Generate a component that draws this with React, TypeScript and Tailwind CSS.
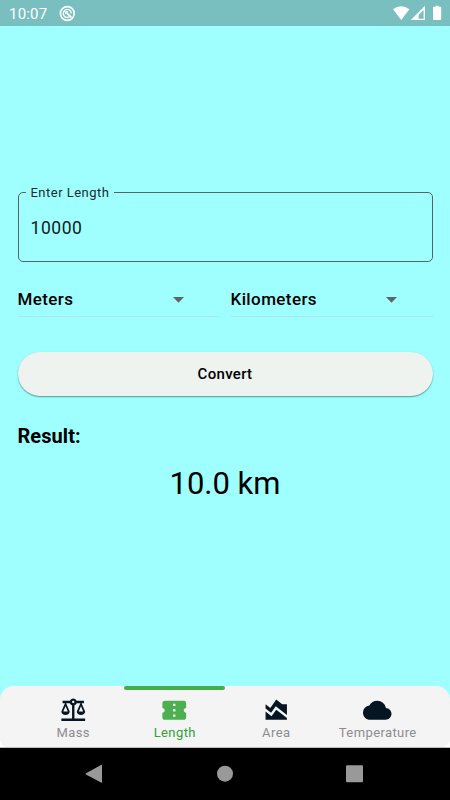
import React from "react";
import { MdAreaChart, MdBalance, MdCloud, MdConfirmationNumber } from "react-icons/md";

const tabs = [
  { label: "Mass", Icon: MdBalance },
  { label: "Length", Icon: MdConfirmationNumber, active: true },
  { label: "Area", Icon: MdAreaChart },
  { label: "Temperature", Icon: MdCloud },
];

function StatusBar() {
  return (
    <header className="flex h-[26px] shrink-0 items-center bg-[#79bfbf] pr-2 pl-[9px] text-white">
      <span className="w-[39px] pt-px text-[15px] leading-[26px] tracking-[0.2px] whitespace-nowrap">10:07</span>
      <svg className="ml-[11px]" width="17" height="17" viewBox="0 0 17 17" fill="none" stroke="currentColor">
        <circle cx="8.3" cy="8.5" r="6.9" strokeWidth="1.7" />
        <path d="M10.8 11.6A4 4 0 1 1 12.3 8.6" strokeWidth="1.3" />
        <path d="M7.2 7.4L12.4 12.4" strokeWidth="1.9" />
        <path d="M5.9 9.8V6.3h3.4z" fill="currentColor" stroke="none" />
      </svg>
      <svg className="ml-auto" width="50" height="16" viewBox="0 0 50 16" fill="currentColor">
        <path d="M1 4.3Q9 -1.6 17.4 4.3L9.2 15z" />
        <path fillRule="evenodd" d="M18.8 15L33 .8V15zM26.6 13.7h4.9V5l-4.9 4.9z" />
        <path d="M27 13.3h4.2V6L27 10.3z" fill="#79bfbf" />
        <path d="M41.8 1.8h1.7V.7h3.2v1.1h1.7q.8 0 .8.8v11.6q0 .8-.8.8h-6.6q-.8 0-.8-.8V2.6q0-.8.8-.8z" />
      </svg>
    </header>
  );
}

function UnitSelect({ label }: { label: string }) {
  return (
    <button className="flex h-[35px] flex-1 items-center border-b border-[#a9e8e8] text-left">
      <span className="w-[155.5px] text-[17px] leading-[34px] font-medium tracking-[0.4px]">{label}</span>
      <svg width="11" height="6" viewBox="0 0 11 6" className="mt-px">
        <path d="M0 0h11L5.5 5.8z" fill="#606464" />
      </svg>
    </button>
  );
}

export default function App() {
  return (
    <div className="flex h-[800px] w-[450px] flex-col overflow-hidden bg-[#9fffff] font-['Roboto',sans-serif] text-black">
      <StatusBar />
      <main className="flex flex-1 flex-col px-[17.5px] pt-[159px]">
        <fieldset className="-mr-px h-[77px] w-[415px] rounded-[5px] border border-[#566464] pl-[7px]">
          <legend className="h-[15px] px-[5px] text-[13px] leading-[15px] tracking-[0.48px] text-[#1c2b2b]">Enter Length</legend>
          <input
            className="mt-4 ml-[5px] block h-6 w-[300px] bg-transparent text-[17.5px] leading-6 tracking-[0.55px] text-[#102020] outline-none"
            defaultValue="10000"
          />
        </fieldset>
        <div className="mt-5 flex gap-[11px]">
          <UnitSelect label="Meters" />
          <UnitSelect label="Kilometers" />
        </div>
        <button className="mt-[35px] h-11 shrink-0 rounded-full bg-[#eef3ef] text-[15px] font-medium tracking-[0.3px] shadow-[0_1px_1.5px_rgba(0,50,50,0.5)]">
          Convert
        </button>
        <h2 className="mt-[28px] text-[20px] leading-6 font-bold tracking-[0.05px]">Result:</h2>
        <p className="mt-4 text-center text-[31px] leading-10">10.0 km</p>
      </main>
      <div className="h-[62px] shrink-0 border-b border-[#bdbdbd] bg-linear-to-b from-[#9fffff] from-50% to-white to-50%">
        <nav className="flex h-[61px] rounded-t-[14px] rounded-b-[8px] bg-[#f4f4f4] px-[22px]">
          {tabs.map(({ label, Icon, active }) => (
            <div key={label} className={`flex flex-1 flex-col items-center ${active ? "text-[#2fa136]" : "text-[#8c8c91]"}`}>
              <div className={`h-1 w-[101px] shrink-0 rounded-[2px] ${active ? "bg-[#46ad4a]" : ""}`} />
              <Icon className={`mt-[6px] size-[28.5px] shrink-0 ${active ? "text-[#4caf50]" : "text-[#061522]"}`} />
              <span className="pl-px text-[13px] leading-4 tracking-[0.4px]">{label}</span>
            </div>
          ))}
        </nav>
      </div>
      <footer className="flex h-[52px] shrink-0 items-center bg-black">
        <svg width="450" height="52" viewBox="0 0 450 52" fill="#999">
          <path d="M86 25.3L101 17q1-.5 1 .6v16.5q0 1-1 .5L86 26.5q-1-.6 0-1.2z" />
          <circle cx="225" cy="25.7" r="8" />
          <rect x="346" y="17.2" width="17" height="17" rx="1" />
        </svg>
      </footer>
    </div>
  );
}
